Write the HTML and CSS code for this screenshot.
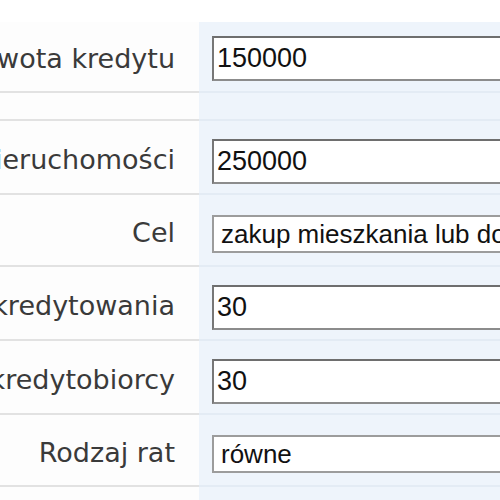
FILE: index.html
```html
<!DOCTYPE html>
<html lang="pl">
<head>
<meta charset="UTF-8">
<meta name="viewport" content="width=device-width, initial-scale=1.0">
<title>Kalkulator kredytowy</title>
<link rel="stylesheet" href="styles.css">
</head>
<body>
<form class="kalkulator">
  <div class="wiersz pierwszy">
    <label class="etykieta" for="kwota"><span>Kwota kredytu</span></label>
    <div class="pole"><input type="text" id="kwota" value="150000"></div>
  </div>

  <div class="wiersz pusty">
    <div class="etykieta"></div>
    <div class="pole"></div>
  </div>

  <div class="wiersz">
    <label class="etykieta" for="wartosc"><span>Wartość nieruchomości</span></label>
    <div class="pole"><input type="text" id="wartosc" value="250000"></div>
  </div>

  <div class="wiersz wybor">
    <label class="etykieta" for="cel"><span>Cel</span></label>
    <div class="pole">
      <select id="cel">
        <option>zakup mieszkania lub domu</option>
        <option>budowa domu</option>
      </select>
    </div>
  </div>

  <div class="wiersz">
    <label class="etykieta" for="okres"><span>Okres kredytowania</span></label>
    <div class="pole"><input type="text" id="okres" value="30"></div>
  </div>

  <div class="wiersz">
    <label class="etykieta" for="wiek"><span>Wiek kredytobiorcy</span></label>
    <div class="pole"><input type="text" id="wiek" value="30"></div>
  </div>

  <div class="wiersz wybor">
    <label class="etykieta" for="raty"><span>Rodzaj rat</span></label>
    <div class="pole">
      <select id="raty">
        <option>równe</option>
        <option>malejące</option>
      </select>
    </div>
  </div>

  <div class="wiersz ostatni">
    <div class="etykieta"></div>
    <div class="pole"></div>
  </div>
</form>
</body>
</html>
```

FILE: styles.css
```css
body {
  margin: 0;
  padding: 22px 0 0 0;
  background-color: #ffffff;
  font-family: 'DejaVu Sans', Verdana, sans-serif;
  overflow: hidden;
}

.kalkulator {
  width: 500px;
}

.wiersz {
  display: grid;
  grid-template-columns: 199px 1fr;
}

.etykieta {
  display: flex;
  justify-content: flex-end;
  align-items: center;
  overflow: hidden;
  white-space: nowrap;
  padding-right: 24px;
  background-color: #fdfdfd;
  border-bottom: 2px solid #e2e2e2;
  color: #3a3a3a;
  font-size: 27px;
}

.pole {
  display: flex;
  align-items: flex-start;
  padding: 18px 0 9px 13px;
  background-color: #eef4fb;
  border-bottom: 2px solid #e3ebf4;
  overflow: hidden;
}

.pierwszy .pole {
  padding-top: 14px;
  padding-bottom: 10px;
}

.pierwszy .etykieta {
  padding-top: 2px;
}

.wiersz .etykieta {
  padding-top: 4px;
  box-sizing: border-box;
}

.wybor .pole {
  padding-top: 20px;
  padding-bottom: 12px;
}

.pusty .pole {
  height: 26px;
  padding: 0;
}

.ostatni .pole {
  height: 40px;
  padding: 0;
}

input[type="text"] {
  flex: none;
  width: 320px;
  height: 45px;
  box-sizing: border-box;
  margin: 0;
  padding: 0 0 0 3px;
  border: 2px solid #8c8c8c;
  border-top-color: #6e6e6e;
  border-left-color: #777777;
  background-color: #ffffff;
  color: #111111;
  font-family: 'Liberation Sans', Arial, sans-serif;
  font-size: 27px;
}

select {
  flex: none;
  width: 330px;
  height: 38px;
  box-sizing: border-box;
  margin: 0;
  padding: 0 0 0 7px;
  border: 2px solid #9c9c9c;
  border-radius: 0;
  background-color: #ffffff;
  color: #111111;
  font-family: 'Liberation Sans', Arial, sans-serif;
  font-size: 26px;
  -webkit-appearance: none;
  appearance: none;
}
```
